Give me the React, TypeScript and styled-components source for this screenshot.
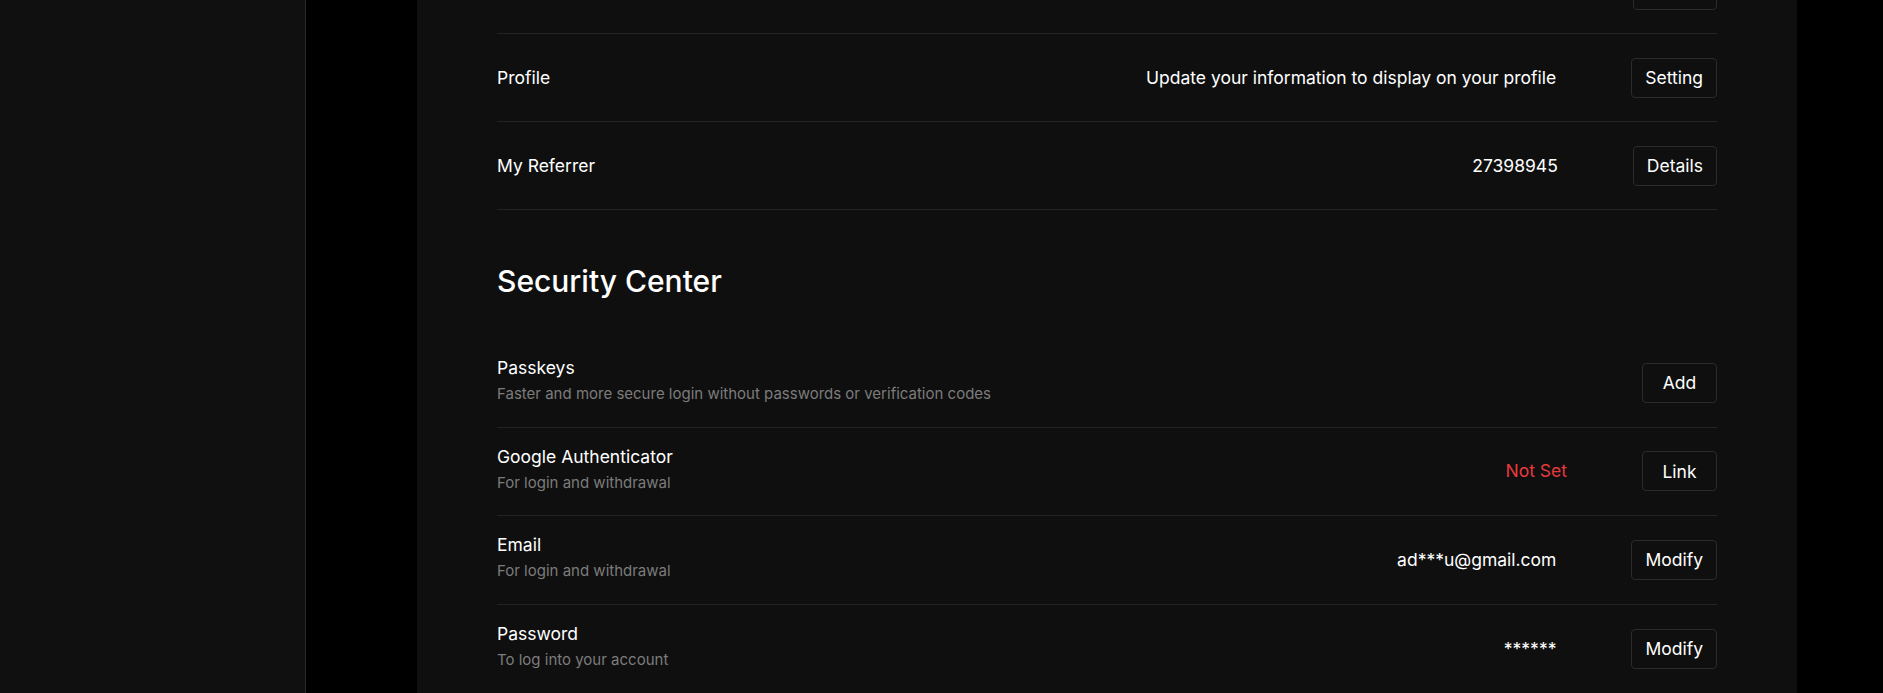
import React from "react";
import styled, { createGlobalStyle } from "styled-components";

const GlobalStyle = createGlobalStyle`
  html, body {
    margin: 0;
    padding: 0;
    background: #000;
    overflow: hidden;
  }
  body {
    font-family: Inter, "Noto Sans", "Liberation Sans", sans-serif;
    color: #fff;
    -webkit-font-smoothing: antialiased;
  }
  * { box-sizing: border-box; }
`;

const Layout = styled.div`
  display: grid;
  grid-template-columns: 306px 1fr;
  height: 693px;
  background: #000;
`;

const Sidebar = styled.aside`
  background: #101010;
  border-right: 1px solid #2a2a2a;
`;

const Main = styled.main`
  padding-left: 111px;
  background: #000;
  overflow: hidden;
`;

const Panel = styled.section`
  width: 1380px;
  height: 693px;
  background: #0f0f0f;
  padding: 0 80px;
  overflow: hidden;
`;

const Scroller = styled.div`
  margin-top: -54px;
`;

const Row = styled.div<{ $last?: boolean; $tall?: boolean }>`
  display: flex;
  align-items: center;
  height: ${(p) => (p.$tall ? "88.5px" : "88px")};
  border-bottom: ${(p) => (p.$last ? "none" : "1px solid #232323")};
`;

const LabelBlock = styled.div<{ $twoLine?: boolean }>`
  flex: 1;
  display: flex;
  flex-direction: column;
  padding-bottom: ${(p) => (p.$twoLine ? "4px" : "0")};
`;

const Label = styled.div`
  font-size: 17.5px;
  line-height: 24px;
  color: #fff;
`;

const Desc = styled.div`
  font-size: 15px;
  line-height: 22px;
  margin-top: 3px;
  color: #7c7c7c;
`;

const Value = styled.div<{ $danger?: boolean }>`
  font-size: 17.5px;
  line-height: 24px;
  margin-right: 75px;
  color: ${(p) => (p.$danger ? "#e8393d" : "#fff")};
`;

const Button = styled.button`
  height: 40px;
  min-width: 75px;
  padding: 0 13px;
  border: 1px solid #2b2b2b;
  border-radius: 4px;
  background: transparent;
  color: #fff;
  font-family: inherit;
  font-size: 17.5px;
  cursor: pointer;
`;

const BlankButton = styled(Button)`
  width: 84px;
`;

const SectionTitle = styled.h2`
  margin: 0;
  padding: 53px 0 40px;
  font-size: 30px;
  line-height: 36px;
  font-weight: 500;
  color: #fff;
`;

type Item = {
  label: string;
  desc?: string;
  value?: string;
  danger?: boolean;
  action: string;
};

const accountItems: Item[] = [
  { label: "Profile", value: "Update your information to display on your profile", action: "Setting" },
  { label: "My Referrer", value: "27398945", action: "Details" },
];

const securityItems: Item[] = [
  { label: "Passkeys", desc: "Faster and more secure login without passwords or verification codes", action: "Add" },
  { label: "Google Authenticator", desc: "For login and withdrawal", value: "Not Set", danger: true, action: "Link" },
  { label: "Email", desc: "For login and withdrawal", value: "ad***u@gmail.com", action: "Modify" },
  { label: "Password", desc: "To log into your account", value: "******", action: "Modify" },
];

function SettingRow({ item, last, tall }: { item: Item; last?: boolean; tall?: boolean }) {
  return (
    <Row $last={last} $tall={tall}>
      <LabelBlock $twoLine={!!item.desc}>
        <Label>{item.label}</Label>
        {item.desc && <Desc>{item.desc}</Desc>}
      </LabelBlock>
      {item.value && <Value $danger={item.danger}>{item.value}</Value>}
      <Button>{item.action}</Button>
    </Row>
  );
}

export default function App() {
  return (
    <>
      <GlobalStyle />
      <Layout>
        <Sidebar />
        <Main>
          <Panel>
            <Scroller>
              <Row>
                <LabelBlock />
                <BlankButton aria-label="Modify" />
              </Row>
              {accountItems.map((it) => (
                <SettingRow key={it.label} item={it} />
              ))}
              <SectionTitle>Security Center</SectionTitle>
              {securityItems.map((it, i) => (
                <SettingRow
                  key={it.label}
                  item={it}
                  tall
                  last={i === securityItems.length - 1}
                />
              ))}
            </Scroller>
          </Panel>
        </Main>
      </Layout>
    </>
  );
}
